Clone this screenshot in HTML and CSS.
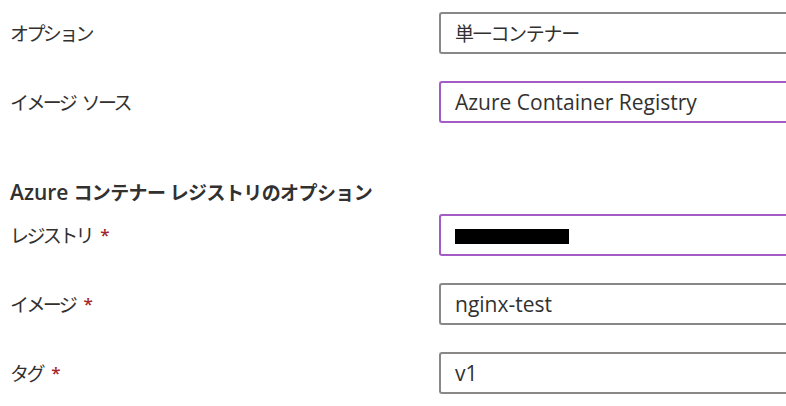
FILE: index.html
```html
<!DOCTYPE html>
<html lang="ja">
<head>
<meta charset="utf-8">
<link rel="stylesheet" href="styles.css">
</head>
<body>
<div class="form">
  <div class="row">
    <div class="label">オプション</div>
    <div class="field"><span class="ja-val">単一コンテナー</span></div>
  </div>
  <div class="row">
    <div class="label">イメージ ソース</div>
    <div class="field focus">Azure Container Registry</div>
  </div>
  <div class="heading"><span class="latin">Azure</span> <span class="ja-head">コンテナー レジストリのオプション</span></div>
  <div class="row">
    <div class="label">レジストリ <span class="req">*</span></div>
    <div class="field focus"><span class="redact"></span></div>
  </div>
  <div class="row">
    <div class="label">イメージ <span class="req">*</span></div>
    <div class="field">nginx-test</div>
  </div>
  <div class="row">
    <div class="label">タグ <span class="req">*</span></div>
    <div class="field">v1</div>
  </div>
</div>
</body>
</html>
```
FILE: styles.css
```css
html, body {
  margin: 0;
  padding: 0;
  background: #ffffff;
  overflow: hidden;
}
body {
  width: 786px;
  height: 406px;
  font-family: "Open Sans", "Noto Sans CJK JP", sans-serif;
  font-size: 21px;
  color: #323130;
}
.form {
  padding: 12px 0 0 10px;
  display: flex;
  flex-direction: column;
  gap: 27px;
}
.row {
  display: grid;
  grid-template-columns: 429px 1fr;
  align-items: center;
}
.label {
  white-space: nowrap;
  font-size: 19px;
  letter-spacing: -2.6px;
  word-spacing: 4px;
}
.req {
  color: #a4262c;
  font-weight: 600;
  font-size: 17px;
  letter-spacing: 0;
  margin-left: 2px;
  position: relative;
  top: -2px;
}
.field {
  box-sizing: border-box;
  height: 42px;
  border: 2px solid #8a8886;
  border-right: none;
  border-radius: 3px 0 0 3px;
  padding: 0 14px;
  display: flex;
  align-items: center;
  white-space: nowrap;
  overflow: hidden;
}
.field.focus {
  border-color: #a35bc6;
}
.ja-val {
  font-size: 19px;
  letter-spacing: -1.3px;
}
.heading {
  font-weight: 600;
  font-size: 19px;
  margin-top: 29px;
  margin-bottom: -19px;
  line-height: 26px;
  white-space: nowrap;
}
.heading .latin {
  font-size: 21px;
}
.ja-head {
  letter-spacing: -0.6px;
}
.redact {
  display: block;
  width: 114px;
  height: 15px;
  background: #000;
  margin-top: 2px;
}
```
